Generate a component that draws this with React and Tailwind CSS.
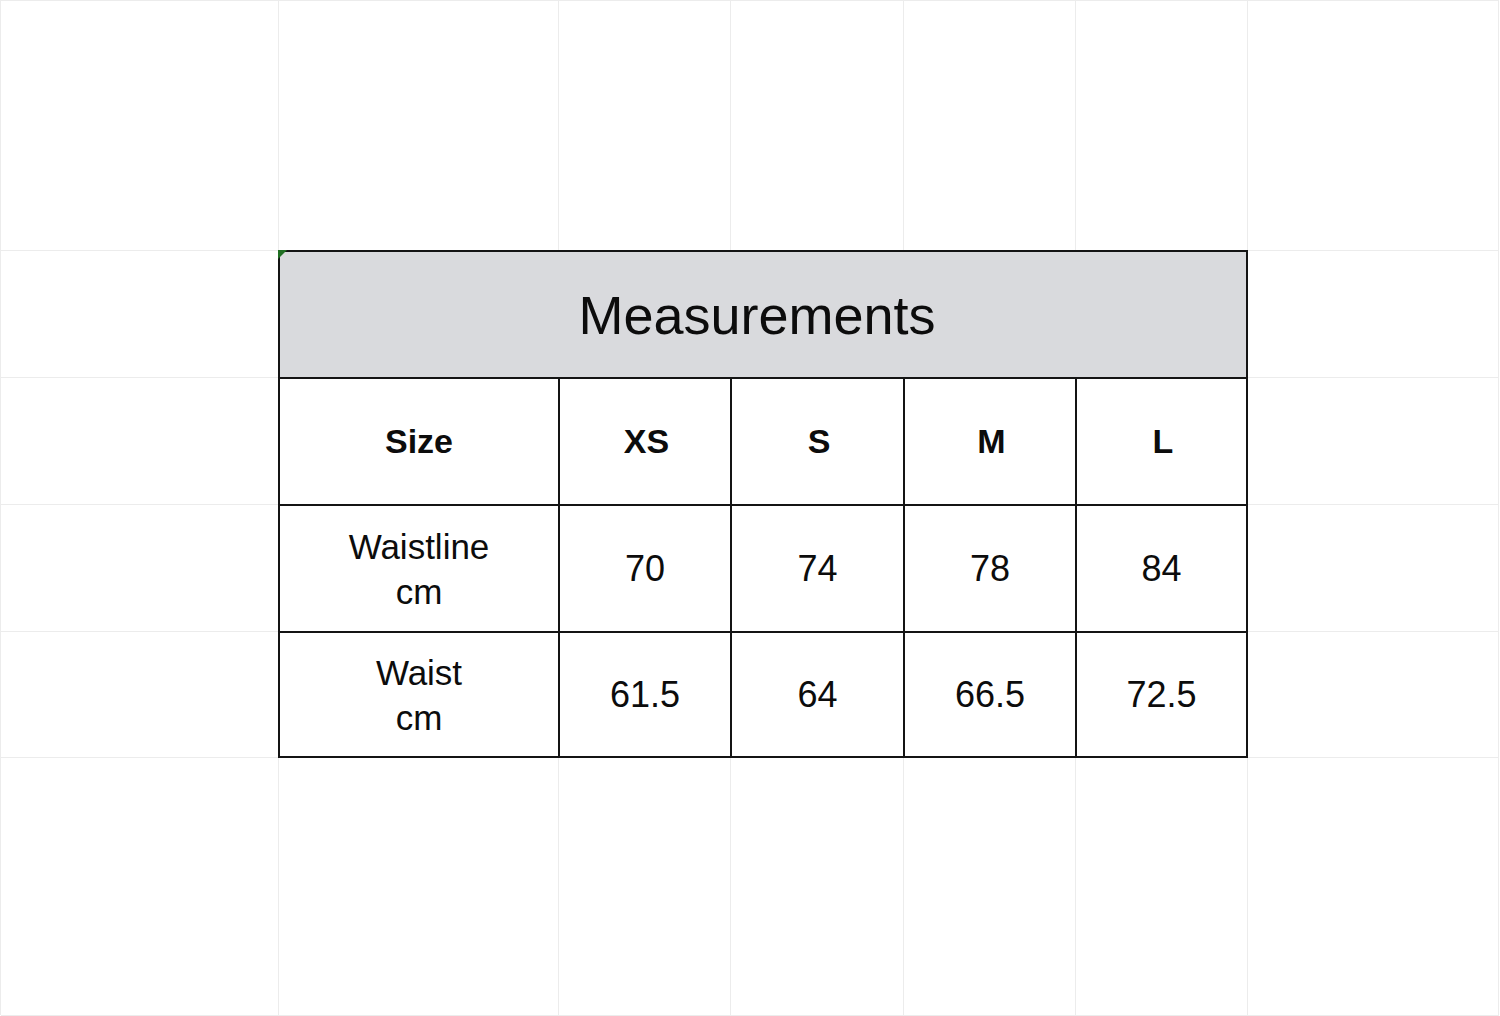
const sizes = ["XS", "S", "M", "L"];
const rows = [
  { label: ["Waistline", "cm"], values: ["70", "74", "78", "84"] },
  { label: ["Waist", "cm"], values: ["61.5", "64", "66.5", "72.5"] },
];

const Cell = ({ children, className = "" }) => (
  <div className={"flex items-center justify-center text-center border-l-2 border-t-2 border-[#141414] " + className}>
    {children}
  </div>
);

const SizeTable = () => {
  return (
    <div className="col-start-2 col-span-5 row-start-2 row-span-4 relative -ml-px -mt-px border-r-2 border-b-2 border-[#141414] bg-white grid grid-cols-[280px_172px_173px_172px_1fr] grid-rows-[127px_127px_127px_1fr] text-[#0c0c0c]">
      <div className="col-span-5 relative flex items-center justify-center pr-[12px] border-l-2 border-t-2 border-[#141414] bg-[#d9dadd]">
        <span className="absolute -left-[2px] -top-[2px] w-0 h-0 border-t-[9px] border-r-[9px] border-t-[#1f6e22] border-r-transparent"></span>
        <span className="text-[54px] leading-none">Measurements</span>
      </div>
      <Cell className="font-bold text-[34px]">Size</Cell>
      {sizes.map((s) => (
        <Cell key={s} className="font-bold text-[34px] pl-[3px]">{s}</Cell>
      ))}
      {rows.map((r) => (
        <div key={r.label[0]} className="contents">
          <Cell className="text-[35px] leading-[45px] flex-col">
            <span>{r.label[0]}</span>
            <span>{r.label[1]}</span>
          </Cell>
          {r.values.map((v, i) => (
            <Cell key={i} className="text-[36px]">{v}</Cell>
          ))}
        </div>
      ))}
    </div>
  );
};

const App = () => {
  const bg = [];
  for (let r = 0; r < 6; r++) {
    for (let c = 0; c < 7; c++) {
      bg.push(
        <div
          key={r + "-" + c}
          className="border-r border-b border-[#ececec]"
          style={{ gridRow: r + 1, gridColumn: c + 1 }}
        />
      );
    }
  }
  return (
    <div className="w-[1500px] h-[1016px] bg-white overflow-hidden" style={{ fontFamily: '"Liberation Sans", Arial, sans-serif' }}>
      <div className="grid grid-cols-[278px_280px_172px_173px_172px_172px_251px] grid-rows-[250px_127px_127px_127px_126px_258px] w-[1499px] h-[1015px] border-l border-t border-[#ececec]">
        {bg}
        <SizeTable />
      </div>
    </div>
  );
};

export default App;
